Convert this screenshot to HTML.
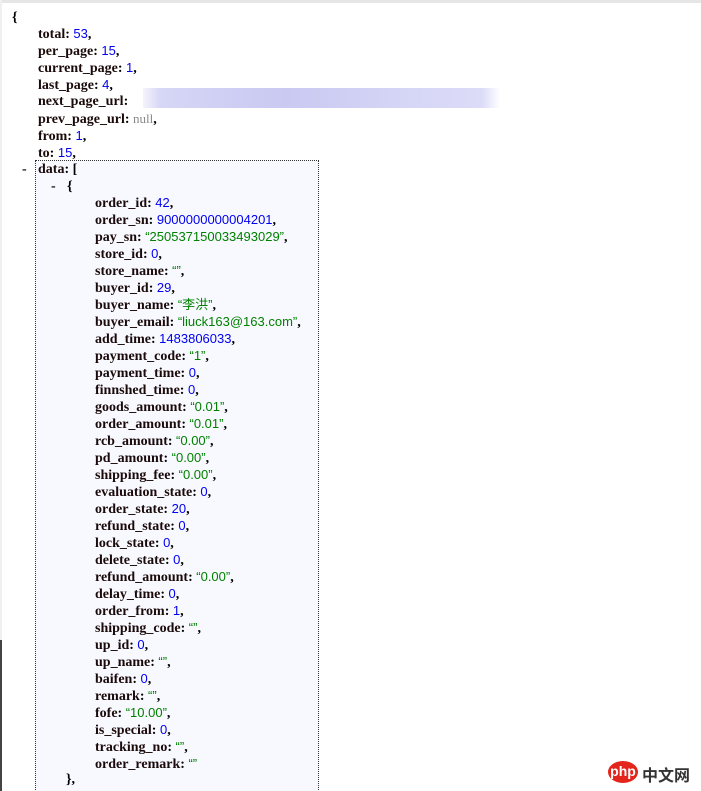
<!DOCTYPE html>
<html><head><meta charset="utf-8"><style>
html,body{margin:0;padding:0;background:#fff;width:701px;height:791px;overflow:hidden;position:relative}
.l{position:absolute;font-family:"Liberation Serif","Noto Serif CJK SC",serif;font-size:14px;font-weight:bold;color:#000;white-space:pre;line-height:17px}
.k{color:#1a0a0a}
.n{color:#0000ee;font-weight:normal;font-family:"Liberation Sans Narrow","Liberation Sans",sans-serif;font-size:13px}
.s{color:#008000;font-weight:normal;font-family:"Liberation Sans Narrow","Liberation Sans","Noto Sans CJK SC",sans-serif;font-size:13px}
.nu{color:#888;font-weight:normal;font-size:13px}
#box{position:absolute;left:35px;top:160px;width:282px;height:640px;border:1px dotted #333;background:#f8f9ff}
</style></head><body>
<div style="position:absolute;left:0;top:0;width:701px;height:3px;background:#e6e6e6"></div>
<div style="position:absolute;left:0;top:0;width:2px;height:791px;background:#f0f0f0"></div>
<div style="position:absolute;left:0;top:640px;width:2px;height:151px;background:#444"></div>
<div id="box"></div>
<div style="position:absolute;left:143px;top:88px;width:357px;height:20px;background:linear-gradient(90deg,#f4f4fb 0,#d6d6f6 5%,#c9c9f2 40%,#d4d4f6 70%,#dcdcf8 95%,#fff 100%)"></div>
<div id="c"></div>
<div style="position:absolute;left:608px;top:761px;width:30px;height:22px;border-radius:50%;background:#e3251b;color:#fff;font:bold 14px 'Liberation Sans',sans-serif;text-align:center;line-height:20px">php</div>
<div style="position:absolute;left:642px;top:762px;font:bold 16px 'Noto Sans CJK SC',sans-serif;color:#333">中文网</div>
<script>
var L=[
[12,17,'{'],
[38,33,'<span class=k>total</span>: <span class=n>53</span>,'],
[38,50,'<span class=k>per_page</span>: <span class=n>15</span>,'],
[38,67,'<span class=k>current_page</span>: <span class=n>1</span>,'],
[38,84,'<span class=k>last_page</span>: <span class=n>4</span>,'],
[38,101,'<span class=k>next_page_url</span>:'],
[38,118,'<span class=k>prev_page_url</span>: <span class=nu>null</span>,'],
[38,135,'<span class=k>from</span>: <span class=n>1</span>,'],
[38,152,'<span class=k>to</span>: <span class=n>15</span>,'],
[22,169,'-'],[38,169,'<span class=k>data</span>: ['],
[51,186,'-'],[67,186,'{']];
var F=[['order_id','n','42'],['order_sn','n','9000000000004201'],['pay_sn','s','“250537150033493029”'],['store_id','n','0'],['store_name','s','“”'],['buyer_id','n','29'],['buyer_name','s','“李洪”'],['buyer_email','s','“liuck163@163.com”'],['add_time','n','1483806033'],['payment_code','s','“1”'],['payment_time','n','0'],['finnshed_time','n','0'],['goods_amount','s','“0.01”'],['order_amount','s','“0.01”'],['rcb_amount','s','“0.00”'],['pd_amount','s','“0.00”'],['shipping_fee','s','“0.00”'],['evaluation_state','n','0'],['order_state','n','20'],['refund_state','n','0'],['lock_state','n','0'],['delete_state','n','0'],['refund_amount','s','“0.00”'],['delay_time','n','0'],['order_from','n','1'],['shipping_code','s','“”'],['up_id','n','0'],['up_name','s','“”'],['baifen','n','0'],['remark','s','“”'],['fofe','s','“10.00”'],['is_special','n','0'],['tracking_no','s','“”'],['order_remark','s','“”']];
F.forEach(function(f,i){L.push([95,202+i*17,'<span class=k>'+f[0]+'</span>: <span class='+f[1]+'>'+f[2]+'</span>'+(i<F.length-1?',':'')]);});
L.push([66,779,'},']);
var h='';L.forEach(function(a){h+='<div class=l style="left:'+a[0]+'px;top:'+(a[1]-8)+'px">'+a[2]+'</div>';});
document.getElementById('c').innerHTML=h;
</script>
</body></html>
